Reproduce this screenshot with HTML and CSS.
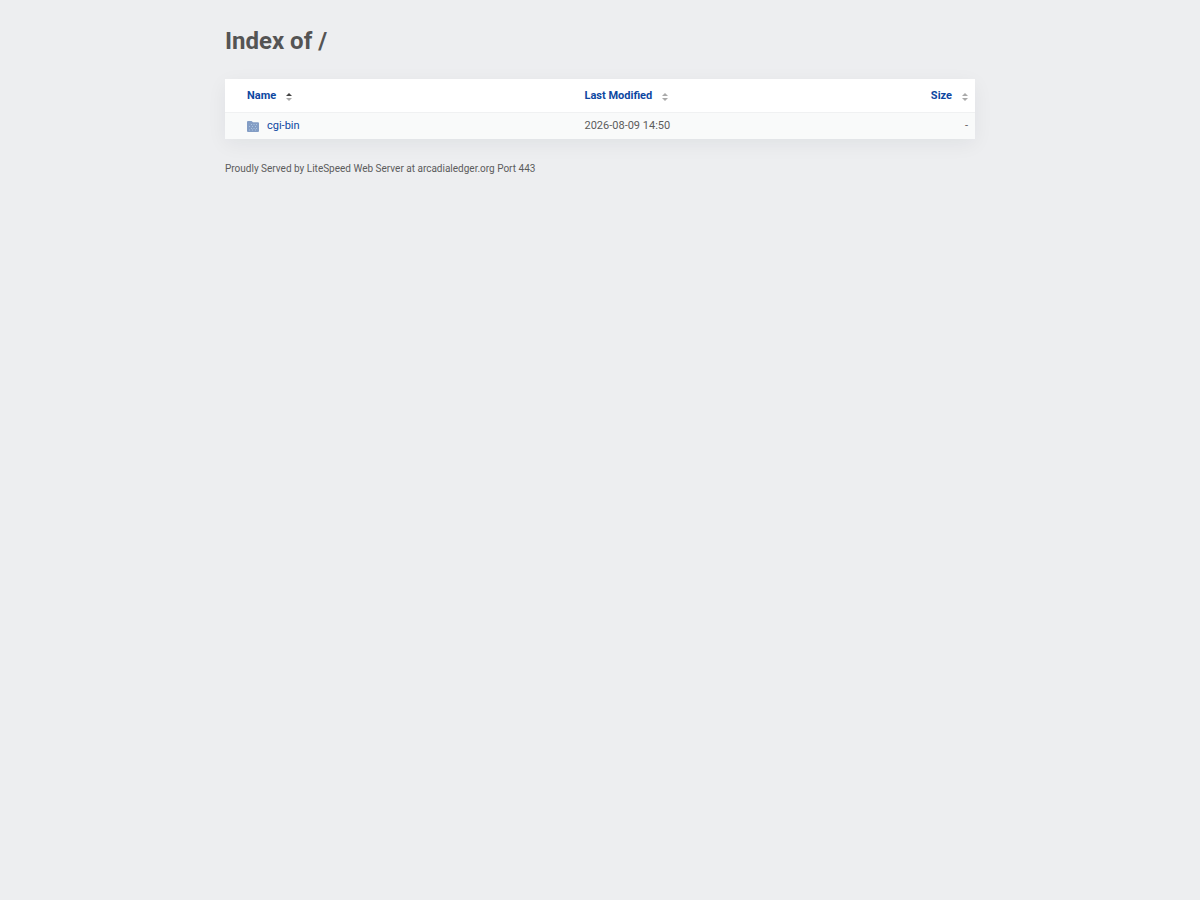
FILE: index.html
```html
<!DOCTYPE html>
<html lang="en">
<head>
  <meta charset="UTF-8">
  <meta name="viewport" content="width=device-width, initial-scale=1.0">
  <title>Index of /</title>
  <link rel="stylesheet" href="styles.css">
</head>
<body>
  <div class="content">
    <h1>Index of /</h1>
    <table class="listing">
      <thead>
        <tr>
          <th class="col-name"><a href="?sort=name">Name<svg class="sort sort-asc" viewBox="0 0 6 8" aria-hidden="true"><path class="up" d="M0 3L3 0L6 3Z"/><path class="down" d="M0 5L3 8L6 5Z"/></svg></a></th>
          <th class="col-date"><a href="?sort=date">Last Modified<svg class="sort" viewBox="0 0 6 8" aria-hidden="true"><path class="up" d="M0 3L3 0L6 3Z"/><path class="down" d="M0 5L3 8L6 5Z"/></svg></a></th>
          <th class="col-size"><a href="?sort=size">Size<svg class="sort" viewBox="0 0 6 8" aria-hidden="true"><path class="up" d="M0 3L3 0L6 3Z"/><path class="down" d="M0 5L3 8L6 5Z"/></svg></a></th>
        </tr>
      </thead>
      <tbody>
        <tr>
          <td class="col-name">
            <a class="entry" href="/cgi-bin/">
              <svg class="folder" viewBox="0 0 12 11" aria-hidden="true">
                <path class="folder-shape" d="M1 0H4.5L6 1.200H11Q12 1.200 12 2.200V10Q12 11 11 11H1Q0 11 0 10V1Q0 0 1 0Z"/>
                <path class="folder-dots" d="M4 3H5V4H4ZM6.500 3H7.500V4H6.500ZM9 3H10V4H9ZM2 5H3V6H2ZM5 5H6V6H5ZM8 5H9V6H8ZM4 7H5V8H4ZM6.500 7H7.500V8H6.500ZM9 7H10V8H9ZM2 8.500H3V9.500H2ZM5 8.500H6V9.500H5ZM8 8.500H9V9.500H8Z"/>
              </svg>
              cgi-bin
            </a>
          </td>
          <td class="col-date">2026-08-09 14:50</td>
          <td class="col-size">-</td>
        </tr>
      </tbody>
    </table>
    <footer>Proudly Served by LiteSpeed Web Server at arcadialedger.org Port 443</footer>
  </div>
</body>
</html>
```
FILE: styles.css
```css
body {
  margin: 0;
  background-color: #edeef0;
  color: #5c5c5c;
  font-family: Roboto, "Liberation Sans", sans-serif;
  font-size: 11px;
  line-height: 16px;
}
.content {
  max-width: 750px;
  margin: 0 auto;
  padding: 24px 12px;
}
h1 {
  margin: 0 0 21px;
  color: #545454;
  font-size: 24px;
  line-height: 34px;
}
a {
  color: #0d47a1;
  text-decoration: none;
}
a:hover {
  text-decoration: underline;
}
.listing {
  width: 100%;
  table-layout: fixed;
  border-collapse: collapse;
  background-color: #fff;
  box-shadow: 0 5px 20px rgba(0, 30, 50, 0.06);
}
th, td {
  box-sizing: border-box;
  text-align: left;
}
th {
  padding: 9px 7px 8px;
}
td {
  padding: 5px 7px;
  background-color: #f9fafa;
  border-top: 1px solid #f0f1f2;
}
.col-name {
  width: 47%;
  padding-left: 22px;
}
.col-date {
  width: 33%;
}
.col-size {
  text-align: right;
}
.sort {
  width: 6px;
  height: 8px;
  margin-left: 10px;
  vertical-align: -2px;
  fill: #aaa;
}
.sort-asc .up {
  fill: #444;
}
.entry {
  display: flex;
  align-items: center;
  gap: 8px;
}
.folder {
  width: 12px;
  height: 11px;
}
.folder-shape {
  fill: #839dc5;
}
.folder-dots {
  fill: #a9c3df;
}
footer {
  margin-top: 22px;
  font-size: 10px;
}
```
